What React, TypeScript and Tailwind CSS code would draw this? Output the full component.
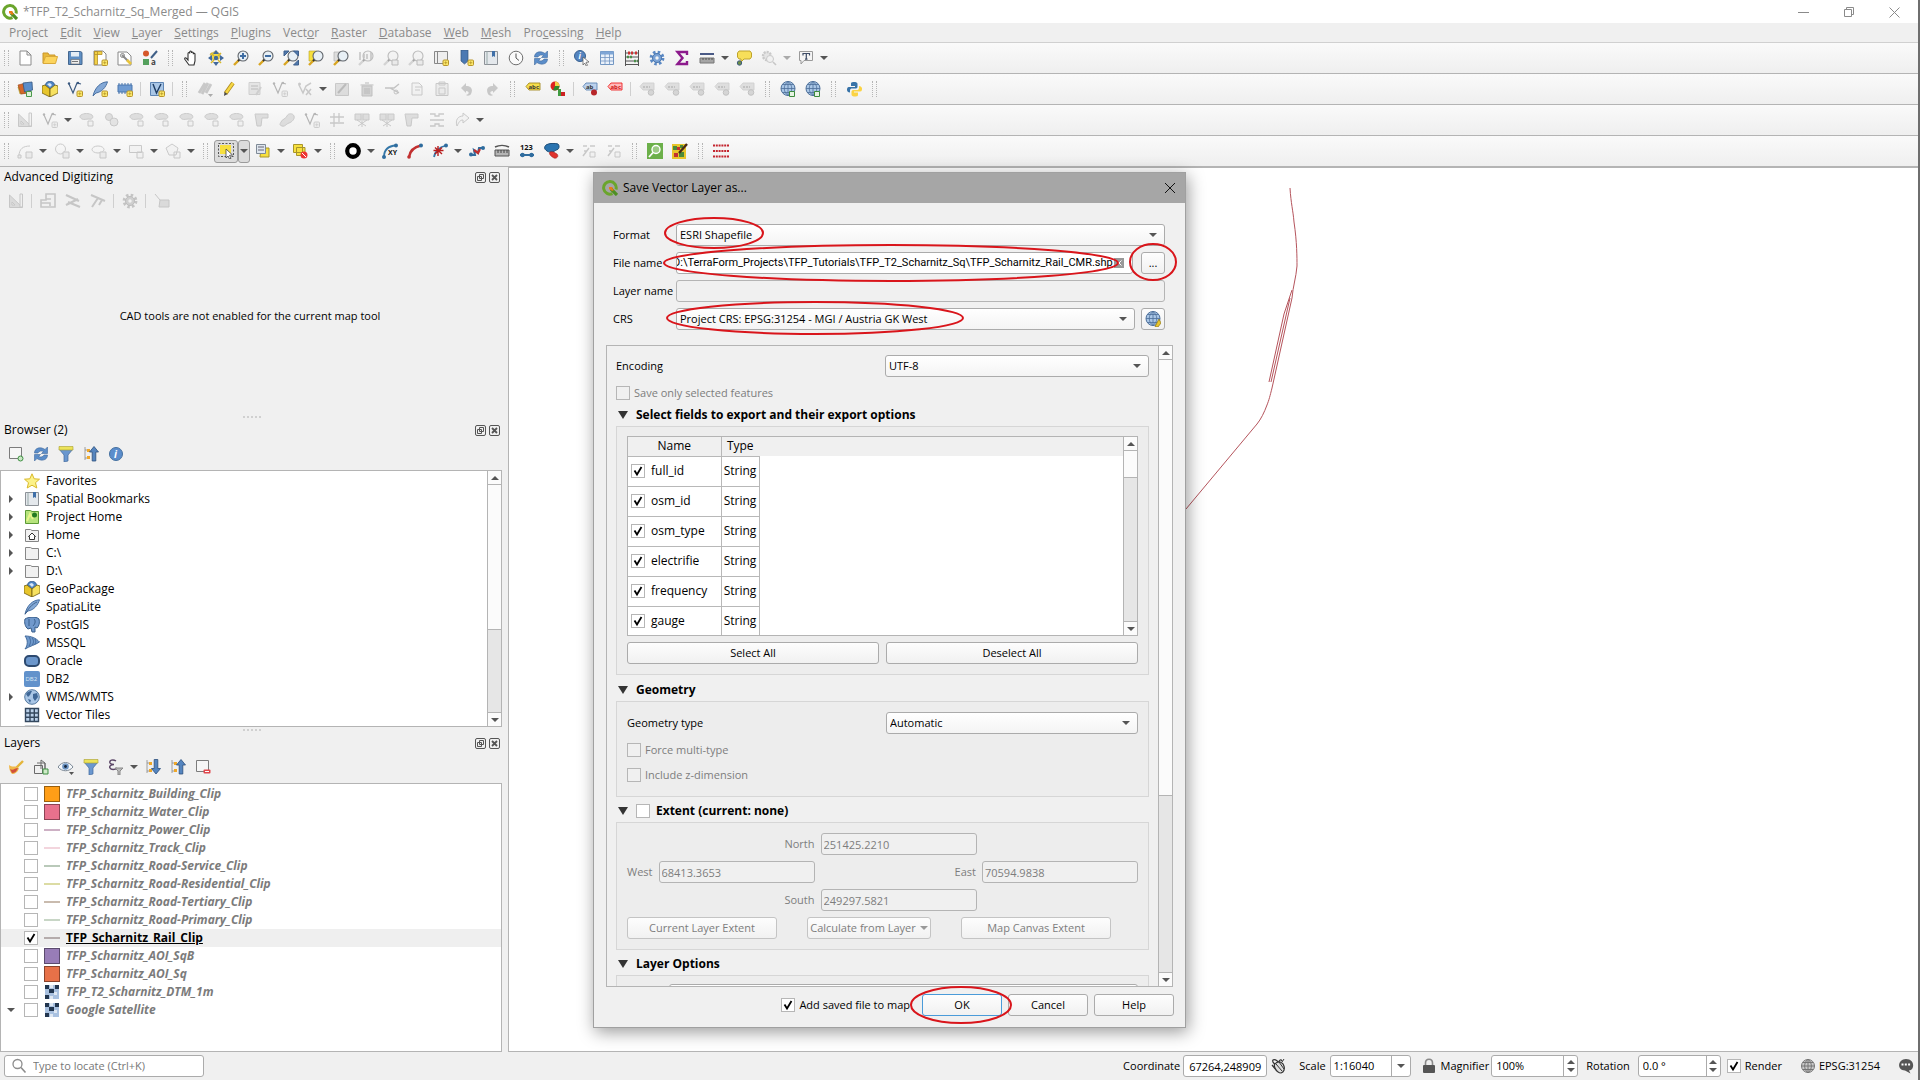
import React from "react";

type IconName = keyof typeof icons;

interface CheckProps {
  id: string;
  label?: string;
  checked?: boolean;
  disabled?: boolean;
  className?: string;
}

interface LayerItem {
  name: string;
  kind: "fill" | "line" | "raster";
  color?: string;
  active?: boolean;
  expandable?: boolean;
}

/* ---------- icon parts ---------- */

const plusBadge = (
  <>
    <rect x="10" y="10" width="5.5" height="5.5" rx="1" fill="#fbe96b" stroke="#b8952a" />
    <path d="M12.7 11.3v3M11.3 12.7h3" stroke="#b8952a" strokeWidth="0.8" />
  </>
);

const lens = (
  <>
    <path d="M6 10 1 15" stroke="#d9a521" strokeWidth="2.4" />
    <path d="M6.5 9.5 5 11" stroke="#333" strokeWidth="2" />
    <circle cx="10" cy="6" r="5" fill="#e8f0f6" stroke="#60656b" strokeWidth="1.1" />
  </>
);

const globe = (
  <>
    <circle cx="8" cy="7.5" r="7" fill="#a9c6e6" stroke="#4d6f99" />
    <path d="M8 .5v14M1 7.5h14M2.5 3.5h11M2.5 11.5h11M8 .5C3 4 3 11 8 14.5M8 .5c5 3.5 5 10.5 0 14" fill="none" stroke="#4d6f99" strokeWidth="0.8" />
  </>
);

const tag = (fill: string, stroke: string) => (
  <path d="M1 5.5 4 2h11v7H4z" fill={fill} stroke={stroke} strokeWidth="0.9" />
);

const tree = (
  <>
    <path d="M2 1v13M2 4h3M2 12h3" stroke="#888" fill="none" strokeWidth="0.8" />
    <path d="M4 3h3v3H4zM4 10h3v3H4z" fill="#f0a828" />
  </>
);

const folder = (
  <path d="M1.5 14.5v-12h5l1.5 1h6.5v11z" fill="#f1f1f1" stroke="#868686" />
);

const icons = {
  file: <path d="M3 1h7l4 4v10H3zM10 1v4h4" fill="#fff" stroke="#8b8b8b" />,
  open: (
    <>
      <path d="M1 13V3h5l1 2h6v3" fill="#e9b93a" stroke="#c9962a" />
      <path d="M1 13.5 3.5 6.5h12l-2 7z" fill="#fcd45c" stroke="#d9a93a" />
    </>
  ),
  save: (
    <>
      <path d="M1.5 1.5h12l1.5 1v12H1.5z" fill="#5f8fc4" stroke="#44678f" />
      <path d="M4 2h8v4.5H4z" fill="#e6eef6" />
      <path d="M4 9.5h8.500V14H4z" fill="#eee" stroke="#666" strokeWidth="0.6" />
      <path d="M5 11.5h6" stroke="#777" />
    </>
  ),
  layout: (
    <>
      <path d="M2 1h9l3 3v11H2z" fill="#fff" stroke="#888" />
      <path d="M2.5 1.5h3v13h-3zM2.5 1.5H10v3H2.5z" fill="#f2d147" stroke="#b5922a" strokeWidth="0.8" />
      {plusBadge}
    </>
  ),
  layoutManager: (
    <>
      <path d="M1 2h9l4 4v9H1z" fill="#fff" stroke="#888" />
      <path d="m5 5 6 6" stroke="#8b8b8b" strokeWidth="2" />
      <path d="m10 10 4 4" stroke="#e9c53c" strokeWidth="2.600" />
      <circle cx="5.5" cy="5.5" r="2" fill="none" stroke="#888" />
    </>
  ),
  style: (
    <>
      <circle cx="4" cy="3.5" r="3" fill="#d5582a" />
      <path d="M15 1 9 8" stroke="#3f5f87" strokeWidth="2" />
      <path d="M1 9h6v6H1z" fill="#54a05d" />
      <text x="9" y="15" fontSize="8" fontWeight="bold" fill="#444">a</text>
    </>
  ),
  hand: (
    <path
      d="M6 15 2 9.5c-1-1.5.5-2.3 1.5-1.200L5 10V3.5c0-1.3 1.7-1.3 1.7 0V2c0-1.3 1.8-1.3 1.8 0v1c0-1.3 1.8-1.3 1.8 0v1.2c0-1.2 1.7-1.2 1.7 0V11l-1 4z"
      fill="#fff"
      stroke="#333"
      strokeWidth="1.1"
    />
  ),
  panSel: (
    <>
      <path d="M2 4 8 1l4 3-1 5-6 1z" fill="#f4dc4a" stroke="#a89030" strokeWidth="0.6" />
      <path d="M8 0 5 4h6zM8 16l-3-4h6zM0 8l4-3v6zM16 8l-4-3v6z" fill="#41699c" />
      <circle cx="8" cy="8" r="2.2" fill="#41699c" />
      <path d="M3 3l3 3M13 3l-3 3M3 13l3-3M13 13l-3-3" stroke="#d8b82b" strokeWidth="1.5" />
    </>
  ),
  zoomIn: (
    <>
      {lens}
      <path d="M10 3v6M7 6h6" stroke="#3f6da3" strokeWidth="2" />
    </>
  ),
  zoomOut: (
    <>
      {lens}
      <path d="M7 6h6" stroke="#3f6da3" strokeWidth="2" />
    </>
  ),
  zoomFull: (
    <>
      {lens}
      <path d="M1 6V1h5zM15.5 6V1h-5zM15.5 10v5h-5z" fill="#4f78ac" stroke="#3d5f8c" />
    </>
  ),
  zoomSel: (
    <>
      <path d="M1 1h8v10H1z" fill="#f7e03e" stroke="#b5a22a" strokeWidth="0.6" />
      {lens}
    </>
  ),
  zoomLayer: (
    <>
      <path d="M1 2h7v9H1z" fill="#ddd" stroke="#aaa" strokeWidth="0.6" />
      {lens}
    </>
  ),
  zoomNative: (
    <>
      {lens}
      <path d="M2 2v8M13 2v8M6 4v4M9 4v5" stroke="#777" strokeWidth="1.5" />
    </>
  ),
  zoomBack: (
    <>
      {lens}
      <path d="M9 10h6v5H9z" fill="#ddd" stroke="#666" />
    </>
  ),
  zoomGear: (
    <>
      <circle cx="6" cy="6" r="4" fill="#ccc" stroke="#888" strokeWidth="2.4" strokeDasharray="2 1" />
      <circle cx="9" cy="9" r="3.5" fill="#eee" stroke="#888" />
      <path d="m12 12 3 3" stroke="#888" strokeWidth="1.6" />
    </>
  ),
  bookmarkNew: (
    <>
      <path d="M1.5 1.5h13v12h-13z" fill="#eee" stroke="#888" />
      <path d="M4.5 1.5v12" stroke="#888" />
      {plusBadge}
    </>
  ),
  flagNew: (
    <>
      <path d="M3 0h7v11l-3.5 3L3 11z" fill="#4b79b3" stroke="#35577f" strokeWidth="0.7" />
      {plusBadge}
    </>
  ),
  bookmarks: (
    <>
      <path d="M1.5 1.5h13v13h-13z" fill="#e4e8ec" stroke="#8c9197" />
      <path d="M4 1.5v13" stroke="#9aa" />
      <path d="M9 1h3v6l-1.5-1L9 7z" fill="#3f6fa8" />
    </>
  ),
  clock: (
    <>
      <circle cx="8" cy="8" r="6.8" fill="#fafafa" stroke="#6f6f6f" />
      <path d="M8 3.5V8l3 2.5" fill="none" stroke="#555" />
    </>
  ),
  refresh: (
    <>
      <path d="M1.5 7C1.500 1.500 8 .5 12 3.500L14.500 1v6.500H8.500l2-2C8.500 4.500 6 5 5 7z" fill="#5b8dc9" stroke="#41699c" strokeWidth="0.6" />
      <path d="M14.5 9c0 5.500-6.500 6.500-10.500 3.500L1.500 15V8.500h6l-2 2c2 1 4.500.5 5.500-1.500z" fill="#5b8dc9" stroke="#41699c" strokeWidth="0.6" />
    </>
  ),
  identify: (
    <>
      <circle cx="6" cy="6" r="5.5" fill="#5484bf" stroke="#38608f" />
      <text x="4.5" y="9" fontSize="8" fontWeight="bold" fontStyle="italic" fill="#fff">i</text>
      <path d="m9 7 6 5-3 .3 1.5 3-1.3.7-1.5-3L9 15z" fill="#fff" stroke="#555" strokeWidth="0.7" />
    </>
  ),
  table: (
    <>
      <path d="M1.5 1.5h13v13h-13z" fill="#eaf1fa" stroke="#7296c2" />
      <path d="M1.5 1.5h13v3h-13z" fill="#7fa6d6" />
      <path d="M1.5 7.5h13M1.5 11h13M6 4v10M10.5 4v10" stroke="#7296c2" strokeWidth="0.8" />
    </>
  ),
  abacus: (
    <>
      <path d="M1.5 0v16M14.5 0v16M1 14.5h14M1 3h14M1 7h14M1 11h14" stroke="#555" />
      <path d="M4 3h5M11 3h2" stroke="#c33" strokeWidth="3" strokeDasharray="2 1" />
      <path d="M3 7h5M10 11h4" stroke="#4a8f4a" strokeWidth="2.600" strokeDasharray="2 1" />
    </>
  ),
  gear: (
    <>
      <circle cx="8" cy="8" r="5.8" fill="none" stroke="#5b89c4" strokeWidth="3.2" strokeDasharray="2.4 2.15" />
      <circle cx="8" cy="8" r="4.5" fill="#7ba3d6" stroke="#4a76ad" />
      <circle cx="8" cy="8" r="1.7" fill="#f4f4f4" />
    </>
  ),
  sigma: <path d="M13 5V2H3.500l5 6-5 6H13v-3" fill="none" stroke="#8c1a8c" strokeWidth="2.4" />,
  measure: (
    <>
      <path d="M1 4h14" stroke="#4a5a86" strokeWidth="2" />
      <path d="M1 8h14v5H1z" fill="#a5a5a5" stroke="#777" />
      <path d="M4 8v2M7 8v2M10 8v2M13 8v2" stroke="#555" />
    </>
  ),
  tip: (
    <>
      <path d="M3 1h11l1.5 2v4L14 9H8l-3 3V9H3L1.500 7V3z" fill="#f7df5a" stroke="#bfa42c" />
      <circle cx="3.5" cy="13" r="2.2" fill="#6d8f47" stroke="#3f5b80" />
    </>
  ),
  textNote: (
    <>
      <path d="M1.5 1.5h13v9H6l-3 3.5v-3.5H1.500z" fill="#f5f5f5" stroke="#9a9a9a" />
      <path d="M5 5.500v-2h6.500v2M8.300 3.500v6M7 9.200h2.500" stroke="#3e4c66" strokeWidth="1.2" fill="none" />
    </>
  ),
  dataSource: (
    <>
      <path d="m1 6 6-2 2 8-6 1z" fill="#e9c53c" stroke="#a58a22" strokeWidth="0.6" />
      <path d="m1 4 8-2 2 10-7 1z" fill="#d5672a" stroke="#99471c" strokeWidth="0.6" />
      <path d="m6 2 9-1 .5 8-8 2z" fill="#5b8dc9" stroke="#35577f" strokeWidth="0.8" />
      <path d="M9.5 10.5h5v5h-5z" fill="#dff0d8" stroke="#4a9a4a" />
    </>
  ),
  geopackage: (
    <>
      <circle cx="8" cy="5" r="4.8" fill="#4d84c4" stroke="#2c527f" strokeWidth="0.7" />
      <path d="M5 3l3-1 2 2-2 2z" fill="#d9e8f7" />
      <path d="m0 5 3-1 5 4v8l-8-4z" fill="#e7c52c" stroke="#6e5c10" strokeWidth="0.8" />
      <path d="m16 5-3-1-5 4v8l8-4z" fill="#f7e160" stroke="#6e5c10" strokeWidth="0.8" />
    </>
  ),
  vector: (
    <>
      <path d="m2 3 4 9 4-10 4 1" fill="none" stroke="#3c5a80" strokeWidth="1.2" />
      <circle cx="2" cy="2.5" r="1.2" fill="#3c5a80" />
      <circle cx="11" cy="2" r="1.2" fill="#3c5a80" />
      {plusBadge}
    </>
  ),
  feather: (
    <>
      <path d="M1 15C3 6 9 1 15.500.8 14 6 10 11 4 12z" fill="#83a8d6" stroke="#41699c" strokeWidth="0.9" />
      <path d="M1 15.500C4 10 8 5 13 3" fill="none" stroke="#35577f" strokeWidth="0.8" />
    </>
  ),
  featherNew: (
    <>
      <path d="M1 15C3 6 9 1 15.500.8 14 6 10 11 4 12z" fill="#83a8d6" stroke="#41699c" strokeWidth="0.9" />
      {plusBadge}
    </>
  ),
  memory: (
    <>
      <path d="M2 2v11M5 2v11M8 2v11M11 2v11M14 2v11" stroke="#4a76ad" />
      <path d="M1 4h14v7H1z" fill="#6f9bd2" stroke="#4a76ad" />
      {plusBadge}
    </>
  ),
  virtual: (
    <>
      <path d="M1.5 1.5h13v13h-13z" fill="#a9c6e6" stroke="#5f86b5" />
      <path d="m4 3 3.5 9L12 3" fill="none" stroke="#1e3c63" strokeWidth="1.4" />
      {plusBadge}
    </>
  ),
  pencils: (
    <>
      <path d="M2 12 8 2M5 13l6-11M9 12l5-9" stroke="#888" strokeWidth="2.8" />
      <path d="M11 13h5l-2.500 3z" fill="#444" />
    </>
  ),
  pencil: (
    <>
      <path d="M3.5 12.5 11 2" stroke="#b08c1f" strokeWidth="4" />
      <path d="M4 12 11 2" stroke="#f6d743" strokeWidth="2.4" />
      <path d="m2 15 .5-4 3 2z" fill="#4a4a4a" />
    </>
  ),
  saveEdits: (
    <>
      <path d="M2 1.5h11v12H2z" fill="#ccc" stroke="#999" />
      <path d="M4 5h7M4 8h7" stroke="#888" strokeWidth="1.5" />
      <path d="M9 14l5-8" stroke="#999" strokeWidth="2" />
    </>
  ),
  node: (
    <>
      <path d="m2 4 4 8 3-7 5-3M9 8l5 6M14 8l-5 6" fill="none" stroke="#888" strokeWidth="1.5" />
      <circle cx="2.5" cy="3" r="1.5" fill="#888" />
    </>
  ),
  modify: (
    <>
      <path d="M1.5 2.5h13v12h-13z" fill="#bbb" stroke="#888" />
      <path d="m4 12 8-9" stroke="#666" strokeWidth="2" />
    </>
  ),
  trash: (
    <>
      <path d="M3 5h10v10H3z" fill="#c99" stroke="#a66" />
      <path d="M1.5 4h13M6 2h4M6 7v6M8 7v6M10 7v6" stroke="#955" />
    </>
  ),
  cut: (
    <>
      <path d="M1 7h9l5-4M6 7l9 5" fill="none" stroke="#777" strokeWidth="1.4" />
      <circle cx="12" cy="11" r="2" fill="none" stroke="#777" />
    </>
  ),
  copy: <path d="M3 2h7l3 3v9H3zM6 6h7M6 9h5" fill="#eee" stroke="#888" />,
  paste: <path d="M2 2.5h12v12H2zM5 1h6v3H5zM5 7h6v6H5z" fill="#ddd" stroke="#888" />,
  undo: <path d="M2 7 7 2v3c6 0 7 4 5 8-1 2-4 2-5 1 4-1 3-4 0-4v2z" fill="#888" />,
  redo: <path d="m14 7-5-5v3c-6 0-7 4-5 8 1 2 4 2 5 1-4-1-3-4 0-4v2z" fill="#888" />,
  label: (
    <>
      {tag("#f6df4c", "#a58a22")}
      <text x="3.5" y="8" fontSize="6" fontWeight="bold" fill="#333">abc</text>
    </>
  ),
  diagram: (
    <>
      <circle cx="5" cy="5" r="4.5" fill="#d22" />
      <path d="M5 5V.5A4.500 4.500 0 0 1 9.500 5z" fill="#f2d147" />
      <path d="M5 5h4.500A4.500 4.500 0 0 1 3 9z" fill="#2c8a2c" />
      <path d="M8 8h3v7H8z" fill="#3f9b3f" />
      <path d="M11 11h4v4h-4z" fill="#c22" />
    </>
  ),
  labelPin: (
    <>
      {tag("#bcd1ec", "#5f86b5")}
      <text x="4" y="8" fontSize="6" fontWeight="bold" fill="#333">ab</text>
      <circle cx="12" cy="11.5" r="3" fill="#b8262a" />
    </>
  ),
  labelRed: (
    <>
      {tag("#fbb", "#e22")}
      <text x="3.5" y="8" fontSize="6" fontWeight="bold" fill="#c11">abc</text>
    </>
  ),
  labelGrey: (
    <>
      {tag("#bbb", "#999")}
      <path d="M4 6h7" stroke="#777" strokeWidth="2" strokeDasharray="2 1" />
      <circle cx="12" cy="11.5" r="2.8" fill="#aaa" stroke="#777" />
    </>
  ),
  globePlug: (
    <>
      {globe}
      <path d="M9.5 10.5h5v5h-5z" fill="#e6f3e2" stroke="#3d8a3d" />
    </>
  ),
  python: (
    <>
      <path d="M8 1C5 1 5 2 5 3v2h4v1H3C1 6 1 8 1 9s1 2.5 3 2.5V9.500C4 8 5 7.500 6 7.500h4c1 0 1.500-1 1.500-2V3C11.500 1.500 10 1 8 1z" fill="#3873a8" />
      <path d="M9 15.5c3 0 3-1 3-2v-2H8v-1h6c2 0 2-2 2-3S15 5 13 5v2c0 1.500-1 2-2 2H7c-1 0-1.500 1-1.500 2v2.500c0 1.500 1.500 2 3.500 2z" fill="#fbd343" />
    </>
  ),
  ruler: (
    <>
      <path d="M1.5 2v12.500h13z" fill="#bbb" stroke="#888" />
      <path d="M12 1h2.500v13H12zM4 9v3h3z" fill="#eee" stroke="#888" />
    </>
  ),
  shapeMove: (
    <>
      <path d="M2 3c3-2 8-2 11 0 2 2 0 5-3 4-3 0-5 1-7 0S0 4 2 3z" fill="#bbb" stroke="#888" />
      <path d="M9 9h5v5H9z" fill="#eee" stroke="#888" />
    </>
  ),
  shapes: (
    <>
      <circle cx="5" cy="5" r="3.5" fill="#bbb" stroke="#888" />
      <circle cx="10" cy="10" r="4" fill="#ccc" stroke="#888" />
    </>
  ),
  shapeOff: <path d="M1 2h13v4H8l-1 8H3L2 8z" fill="#bbb" stroke="#888" />,
  blob: <path d="M2 10c1-3 5-3 6-6s6-3 7 0-2 6-5 7-4 4-7 3-2-2-1-4z" fill="#bbb" stroke="#888" />,
  split: <path d="M1 5h14M1 11h14M5 1v14M10 1v9" fill="none" stroke="#888" strokeWidth="1.3" />,
  align: <path d="M1 2h5v2h4V2h5M1 8h14M1 14h5v-2h4v2h5" fill="none" stroke="#888" strokeWidth="1.3" />,
  cutShape: (
    <>
      <path d="M1 2h6v6H1zM9 2h6v6H9z" fill="#bbb" stroke="#888" />
      <path d="M8 1v14M3 8l9 6M13 8l-9 6" stroke="#888" />
    </>
  ),
  rotate: <path d="M3 14C1 8 4 4 9 4V1l6 5-6 5V8c-3 0-4 2-6 6z" fill="#eee" stroke="#888" />,
  curve: (
    <>
      <path d="M2 13c0-7 4-10 11-10" fill="none" stroke="#888" />
      <path d="M1 12h3v3H1zM9 9h6v6H9z" fill="#ddd" stroke="#888" />
    </>
  ),
  circle: (
    <>
      <circle cx="6.5" cy="6" r="5" fill="none" stroke="#888" />
      <path d="M9 9h6v6H9z" fill="#ddd" stroke="#888" />
    </>
  ),
  ellipse: (
    <>
      <ellipse cx="7" cy="6.5" rx="6" ry="3.5" fill="none" stroke="#888" />
      <path d="M9 9h6v6H9z" fill="#ddd" stroke="#888" />
    </>
  ),
  rectangle: <path d="M1.5 2.5h12v7h-12zM9 9h6v6H9z" fill="#eee" stroke="#888" />,
  polygon: <path d="m7 1 6 4-2 7H4L1 5zM9 9h6v6H9z" fill="#eee" stroke="#888" />,
  select: (
    <>
      <path d="M2 2h11v9H2z" fill="#f7e03e" />
      <path d="M.5.5h15v13H.5z" fill="none" stroke="#555" strokeDasharray="2 1.5" />
      <path d="m8 6 6.5 6-3 .3 1.5 3-1.5.7-1.5-3L8 15z" fill="#fff" stroke="#444" strokeWidth="0.8" />
    </>
  ),
  selectForm: (
    <>
      <path d="M6 5h8v9H5z" fill="#f7e03e" stroke="#a8952a" />
      <path d="M1.5 1.5h9v9h-9z" fill="#dfe6ee" stroke="#7f8a96" />
      <path d="M3 4h6M3 7h6" stroke="#667" />
    </>
  ),
  deselect: (
    <>
      <path d="M1.5 1.5h9v8h-9zM4.5 4.500h8.500v8H4.500z" fill="#f7e03e" stroke="#a8952a" />
      <circle cx="12" cy="12" r="3.5" fill="#e33" />
      <path d="m10 10 4 4" stroke="#fff" />
    </>
  ),
  ring: <circle cx="8" cy="8" r="5.8" fill="#fff" stroke="#000" strokeWidth="4.2" />,
  curveXY: (
    <>
      <path d="M2 14C2 7 6 3 14 2.500" fill="none" stroke="#3577a8" strokeWidth="1.8" />
      <circle cx="2" cy="14" r="2" fill="#2f6c9e" />
      <circle cx="14" cy="2.5" r="2" fill="#2f6c9e" />
      <text x="6" y="12" fontSize="7" fontWeight="bold" fill="#111">XY</text>
    </>
  ),
  curveRed: (
    <>
      <path d="M2 14C3 7 7 4 14 2.500" fill="none" stroke="#c23030" strokeWidth="2.4" />
      <circle cx="2" cy="14" r="1.8" fill="#c23030" />
      <circle cx="14" cy="2.5" r="2" fill="#2f6c9e" />
    </>
  ),
  curveStar: (
    <>
      <path d="M2 14C3 8 8 4 14 2.500" fill="none" stroke="#3577a8" strokeWidth="1.8" />
      <path d="M6 3v10M1.500 7.500h10M3 4.500l7 6.500M10 4.500 3 11" stroke="#b81d1d" strokeWidth="1.4" />
      <circle cx="14" cy="2.5" r="2" fill="#2f6c9e" />
    </>
  ),
  zigzag: (
    <>
      <path d="M1 12h5l-1-5 4 3 1-5h5" fill="none" stroke="#2f6c9e" strokeWidth="2" />
      <path d="m5 7 4 3 2-4" fill="none" stroke="#c23030" strokeWidth="2.2" />
      <circle cx="2" cy="11.5" r="2" fill="#2f6c9e" />
      <circle cx="14" cy="5" r="2" fill="#2f6c9e" />
    </>
  ),
  scaleBar: (
    <>
      <path d="M1 4c4-2 10-2 14 0" fill="none" stroke="#555" strokeWidth="1.5" />
      <path d="M1 7h14v6H1z" fill="#b5b5b5" stroke="#555" />
      <path d="M4 7v3M7 7v3M10 7v3M13 7v3" stroke="#444" />
    </>
  ),
  numbers: (
    <>
      <text x="1" y="7" fontSize="7.5" fontWeight="bold" fill="#111">123</text>
      <path d="M1 12h14" stroke="#2f6c9e" strokeWidth="2" />
      <circle cx="3.5" cy="12" r="2.2" fill="#2f6c9e" />
      <circle cx="12.5" cy="12" r="2.2" fill="#2f6c9e" />
    </>
  ),
  cloudRed: (
    <>
      <path d="M2 2c3-2 9-2 12-1 2 2 1 6-2 6-2 2-6 3-9 1S0 4 2 2z" fill="#2a74b0" stroke="#1c4d78" />
      <path d="M6 9c3-1 5 1 7 2 2 2 0 5-3 4-2-1-6-4-4-6z" fill="#e0332e" stroke="#a31d1d" strokeWidth="0.6" />
    </>
  ),
  dots: (
    <>
      <path d="M2 3h4M9 3h5M3 8h3M2 13l6-8" stroke="#888" strokeWidth="1.5" />
      <path d="M9 9h5v5H9z" fill="#eee" stroke="#888" />
    </>
  ),
  searchGreen: (
    <>
      <path d="M0 0h16v16H0z" fill="#6cb04a" />
      <circle cx="9" cy="6.5" r="4" fill="#9cca84" stroke="#fff" strokeWidth="1.4" />
      <path d="m6 9.5-4 4.5" stroke="#fff" strokeWidth="1.8" />
    </>
  ),
  mapBrush: (
    <>
      <path d="M0 1h14v15H0z" fill="#e9c62b" />
      <path d="M1 3h4v4H1zM7 9h5v5H7zM8 2h3v3H8z" fill="#4c8a3a" />
      <path d="M2 10h4v4H2zM5 4h3v3H5z" fill="#c23030" />
      <path d="m7 10 8-9" stroke="#4a2a14" strokeWidth="2.4" />
    </>
  ),
  redGrid: (
    <path d="M0 2.5h16M0 8h16M0 13.5h16" stroke="#c4252f" strokeWidth="2" strokeDasharray="2 .8" />
  ),
  parallel: <path d="M1 2l13 6M3 9l12 5M1 12l12-6" fill="none" stroke="#888" strokeWidth="2.2" />,
  perpendicular: <path d="M1 2l14 6M2 14l6-9M9 12l3-5" fill="none" stroke="#888" strokeWidth="2" />,
  construct: <path d="M6 1h9v13H1V7h5zM1 10h9v3M6 1v5h5" fill="none" stroke="#888" strokeWidth="1.6" />,
  flag: <path d="m1 1 5 6M6 7h9v7H5z" fill="#bbb" stroke="#888" />,
  addLayer: (
    <>
      <path d="M1.5 1.5h12v11h-12z" fill="#f6f6f6" stroke="#7c7c7c" />
      <circle cx="12.5" cy="12.5" r="2.5" fill="#c9e6c4" stroke="#3f9142" />
    </>
  ),
  removeLayer: (
    <>
      <path d="M1.5 1.5h12v11h-12z" fill="#f6f6f6" stroke="#7c7c7c" />
      <rect x="8.5" y="10.5" width="7" height="4" rx="1" fill="#e0474c" />
      <path d="M10 12.5h4" stroke="#fff" />
    </>
  ),
  filter: (
    <>
      <path d="M1 3h14l-5 6v6l-4 1V9z" fill="#6a97cf" stroke="#41699c" strokeWidth="0.7" />
      <path d="M1 .5h14V4H1z" fill="#ece35a" stroke="#a8a02c" strokeWidth="0.6" />
    </>
  ),
  collapse: (
    <>
      {tree}
      <path d="M11 .5 6.500 6h2.700v9h3.600V6h2.700z" fill="#5585bf" stroke="#2c4f7c" strokeWidth="0.8" />
    </>
  ),
  expand: (
    <>
      {tree}
      <path d="M11 15 6.500 9.500h2.700v-9h3.600v9h2.700z" fill="#5585bf" stroke="#2c4f7c" strokeWidth="0.8" />
    </>
  ),
  info: (
    <>
      <circle cx="8" cy="8" r="6.5" fill="#5b8dcc" stroke="#45709f" />
      <text x="6" y="12" fontSize="10" fontWeight="bold" fontStyle="italic" fill="#fff">i</text>
    </>
  ),
  star: (
    <path d="m8 .8 2.200 5 5.300.4-4 3.500 1.300 5.300L8 12.200 3.200 15l1.300-5.300-4-3.500 5.300-.4z" fill="#fcf28a" stroke="#d9b92a" />
  ),
  projectHome: (
    <>
      <path d="M1.5 14.5v-13h5l1.5 1h6.5v12z" fill="#b6e37c" stroke="#5c9a35" />
      <path d="M3 12l3-7 3 5" fill="none" stroke="#e8f58a" strokeWidth="2" />
      <circle cx="10.5" cy="6" r="2.5" fill="#237a23" />
    </>
  ),
  home: (
    <>
      {folder}
      <path d="M5.5 12.500V9.500H4.500L8 6l3.500 3.500h-1v3z" fill="#fff" stroke="#333" />
    </>
  ),
  folder,
  elephant: (
    <path d="M1 2c3-2 11-3 14 0 1 4 0 7-2 9l-2-1v5H8l-1-4-3 1C1 10 0 5 1 2zM5 2v7M10 2c2 2 1 5-1 7" fill="#7199cc" stroke="#375d8a" />
  ),
  mssql: (
    <>
      <path d="M1 1c6 0 11 2 14.500 6C11 10 6 11 1 14c3-4 3-9 0-13z" fill="#6f99cc" stroke="#41699c" />
      <path d="M5 2c2 3 2 6 0 9M8 3c2 2 2 5 0 7M11 4c1 2 1 3 0 5" fill="none" stroke="#41699c" />
    </>
  ),
  oracle: <rect x="1" y="3" width="14" height="10" rx="4" fill="#6b96cb" stroke="#2d4a70" strokeWidth="2" />,
  db2: (
    <>
      <rect width="16" height="16" rx="2" fill="#6292cb" />
      <text x="1.5" y="10" fontSize="6" fill="#dbe8f6">DB2</text>
    </>
  ),
  world: (
    <>
      <circle cx="8" cy="8" r="7.3" fill="#a9c6e6" stroke="#54799f" />
      <path d="M2 5c2-3 4-3 6-3L6 6 4 8zM9 5l4-1 1 4-3 4-2-3zM4 10l3 1-1 3z" fill="#3f6796" />
    </>
  ),
  grid: (
    <>
      <path d="M1.5 1.5h13v13h-13z" fill="#b9d0ea" />
      <path d="M1.5 1.5h13v13h-13zM1.500 6h13M1.500 10.300h13M6 1.500v13M10.300 1.500v13" fill="none" stroke="#33475e" strokeWidth="1.4" />
    </>
  ),
  brush: (
    <>
      <path d="m8 9 7-7" stroke="#e4b53a" strokeWidth="2.4" />
      <path d="M1 6c3 3 6 0 10 3-1 4-4 6-7 6-2-2-3-5-3-9z" fill="#f0b84a" />
      <path d="M2 10c3 2 5-1 8-1-1 3-3 5-6 5z" fill="#d0503c" />
    </>
  ),
  addGroup: (
    <>
      <path d="M1.5 6.5h8v8h-8zM4 4h8v8M8 10V1l4 3v8" fill="none" stroke="#6a6a6a" />
      <path d="M10 10h5v5h-5z" fill="#cfeac8" stroke="#3f9142" />
    </>
  ),
  eye: (
    <>
      <path d="M0 8c4-6 11-6 15 0-4 5-11 5-15 0z" fill="#f5f8fb" stroke="#7a8794" />
      <circle cx="7.5" cy="7.5" r="3.3" fill="#6d94c2" />
      <circle cx="7.5" cy="7.5" r="1.4" fill="#16273d" />
      <path d="m11 13 2.5 3L16 13z" fill="#555" />
    </>
  ),
  epsilon: (
    <>
      <path d="M8 2C5 0 1 1 2 4c.5 1 2 1.500 4 1.500C3 5.500 1 7 2 9c1 2 5 2 7 0" fill="none" stroke="#5a4566" strokeWidth="1.5" />
      <path d="M7 9h8l-3 3v4h-2v-4z" fill="#bbb" stroke="#888" />
    </>
  ),
  raster: (
    <>
      <path d="M1 1h14v14H1z" fill="#a9c1e0" />
      <path d="M1 1h4v4H1zM11 1h4v4h-4zM5 5h5v4H5zM1 11h4v4H1z" fill="#22364f" />
      <path d="M10 8h3v3h-3zM6 1h3v3H6zM6 12h3v3H6z" fill="#dfe8f3" />
    </>
  ),
  globeEdit: (
    <>
      {globe}
      <path d="M10 15.500 14 8l2 4-3 4z" fill="#e8c52d" stroke="#8d7616" strokeWidth="0.7" />
    </>
  ),
  globeGrey: (
    <>
      <circle cx="8" cy="8" r="6.5" fill="#c9c9c9" stroke="#757575" />
      <path d="M8 1v14M1.500 8h13M3 4.500h10M3 11.500h10M8 1C3.500 5 3.500 11 8 15M8 1c4.500 4 4.500 10 0 14" fill="none" stroke="#757575" />
    </>
  ),
  mouse: (
    <>
      <path d="M5 7C2 5 1 3 2 2s4 0 5 2M8 4C8 2 10 1 11 3M1 7l5 6" fill="none" stroke="#333" strokeWidth="1.2" />
      <path d="M5 5c3-2 7-1 8 3 1 3 0 6-3 7-3 0-5-3-6-5s-1-4 1-5z" fill="#ddd" stroke="#333" strokeWidth="1.2" />
      <path d="m5 6 6 7M8 4l5 7M13 1l-2 3" stroke="#333" />
    </>
  ),
  lock: (
    <>
      <path d="M4.5 8V5c0-5 7-5 7 0v3" fill="none" stroke="#8a8a8a" strokeWidth="1.6" />
      <rect x="2" y="7" width="12" height="8" rx="1" fill="#555" />
    </>
  ),
  chat: (
    <>
      <path d="M8 1c9 0 9 11 3 11.500l1.500 3L7 12.500C-2 12 0 1 8 1z" fill="#555" />
      <path d="M3.5 6.500h9" stroke="#fff" strokeWidth="2" strokeDasharray="2 1.3" />
    </>
  ),
  search: (
    <>
      <circle cx="6.5" cy="6" r="4.5" fill="none" stroke="#8c8c8c" strokeWidth="1.3" />
      <path d="m10 9.5 4.5 5" stroke="#8c8c8c" strokeWidth="1.6" />
    </>
  ),
  qgis: (
    <>
      <path d="M10.500 13.600A6.300 6.300 0 1 1 14 9.500" fill="none" stroke="#6aa52c" strokeWidth="3" />
      <path d="m9 9 6 6" stroke="#4e8f23" strokeWidth="3.200" />
      <path d="M7 7h4l-1 1 2 2-2 1-2-2-1 1z" fill="#ee7913" />
    </>
  ),
};

const Icon: React.FC<{ name: IconName; className?: string }> = ({ name, className = "" }) => (
  <svg viewBox="0 0 16 16" className={`size-4 shrink-0 ${className}`} fill="none" aria-hidden="true">
    {icons[name]}
  </svg>
);

/* ---------- data ---------- */

const menus: [string, string, string][] = [
  ["Pro", "j", "ect"],
  ["", "E", "dit"],
  ["", "V", "iew"],
  ["", "L", "ayer"],
  ["", "S", "ettings"],
  ["", "P", "lugins"],
  ["Vect", "o", "r"],
  ["", "R", "aster"],
  ["", "D", "atabase"],
  ["", "W", "eb"],
  ["", "M", "esh"],
  ["Pro", "c", "essing"],
  ["", "H", "elp"],
];

// ":" handle, "|" separator, "v" drop-down arrow, "-" prefix marks a disabled action
const toolbars: string[][] = [
  "file open save layout layoutManager style : hand panSel zoomIn zoomOut zoomFull zoomSel zoomLayer -zoomNative -zoomBack -zoomBack bookmarkNew flagNew bookmarks clock refresh : identify table abacus gear sigma measure v tip -zoomGear -v textNote v",
  "dataSource geopackage vector featherNew memory | virtual | : -pencils pencil -saveEdits -vector -node v -modify -trash -cut -copy -paste -undo -redo : label diagram | labelPin labelRed | -labelGrey -labelGrey -labelGrey -labelGrey -labelGrey : globePlug globePlug : python :",
  "-ruler -vector v -shapeMove -shapes -shapeMove -shapeMove -shapeMove -shapeMove -shapeMove -shapeOff -blob -vector -split -cutShape -cutShape -shapeOff -align -rotate v",
  "-curve v -circle v -ellipse v -rectangle v -polygon v : *select selectForm v deselect v : ring v curveXY curveRed curveStar v zigzag scaleBar numbers cloudRed v -dots -dots : searchGreen mapBrush : redGrid",
].map((row) => row.split(" "));

const browserItems: { name: string; icon: IconName; expandable?: boolean }[] = [
  { name: "Favorites", icon: "star" },
  { name: "Spatial Bookmarks", icon: "bookmarks", expandable: true },
  { name: "Project Home", icon: "projectHome", expandable: true },
  { name: "Home", icon: "home", expandable: true },
  { name: "C:\\", icon: "folder", expandable: true },
  { name: "D:\\", icon: "folder", expandable: true },
  { name: "GeoPackage", icon: "geopackage" },
  { name: "SpatiaLite", icon: "feather" },
  { name: "PostGIS", icon: "elephant" },
  { name: "MSSQL", icon: "mssql" },
  { name: "Oracle", icon: "oracle" },
  { name: "DB2", icon: "db2" },
  { name: "WMS/WMTS", icon: "world", expandable: true },
  { name: "Vector Tiles", icon: "grid" },
];

const layers: LayerItem[] = [
  { name: "TFP_Scharnitz_Building_Clip", kind: "fill", color: "#ff9e17" },
  { name: "TFP_Scharnitz_Water_Clip", kind: "fill", color: "#e8718d" },
  { name: "TFP_Scharnitz_Power_Clip", kind: "line", color: "#cdb0c4" },
  { name: "TFP_Scharnitz_Track_Clip", kind: "line", color: "#f3d5dd" },
  { name: "TFP_Scharnitz_Road-Service_Clip", kind: "line", color: "#b9c9b9" },
  { name: "TFP_Scharnitz_Road-Residential_Clip", kind: "line", color: "#dcdca4" },
  { name: "TFP_Scharnitz_Road-Tertiary_Clip", kind: "line", color: "#c9bbae" },
  { name: "TFP_Scharnitz_Road-Primary_Clip", kind: "line", color: "#c8d6c6" },
  { name: "TFP_Scharnitz_Rail_Clip", kind: "line", color: "#b5acac", active: true },
  { name: "TFP_Scharnitz_AOI_SqB", kind: "fill", color: "#987db7" },
  { name: "TFP_Scharnitz_AOI_Sq", kind: "fill", color: "#e77148" },
  { name: "TFP_T2_Scharnitz_DTM_1m", kind: "raster" },
  { name: "Google Satellite", kind: "raster", expandable: true },
];

const fields = ["full_id", "osm_id", "osm_type", "electrifie", "frequency", "gauge"];

/* ---------- small controls ---------- */

const Triangle: React.FC<{ dir?: "up" | "down" | "right"; className?: string }> = ({
  dir = "down",
  className = "text-[#555]",
}) => {
  const d = { up: "M0 6h8L4 2z", down: "M0 2h8L4 6z", right: "M2 0v8l4-4z" }[dir];
  return (
    <svg viewBox="0 0 8 8" className={`size-2 shrink-0 ${className}`} aria-hidden="true">
      <path d={d} fill="currentColor" />
    </svg>
  );
};

const Check: React.FC<CheckProps> = ({ id, label, checked, disabled, className = "" }) => (
  <span className={`flex items-center gap-1 ${className}`}>
    <span className="relative flex size-3.5 shrink-0">
      <input
        id={id}
        type="checkbox"
        defaultChecked={checked}
        disabled={disabled}
        aria-label={label ? undefined : id}
        className="peer size-3.5 appearance-none border border-[#b6b6b6] bg-white disabled:bg-[#f0f0f0]"
      />
      <svg viewBox="0 0 14 14" className="pointer-events-none absolute inset-0 hidden peer-checked:block" aria-hidden="true">
        <path d="M3.5 6.5 6 10.5 10.5 3" fill="none" stroke="#000" strokeWidth="1.8" />
      </svg>
    </span>
    {label && (
      <label htmlFor={id} className={disabled ? "text-[#7d7d7d]" : ""}>
        {label}
      </label>
    )}
  </span>
);

const Combo: React.FC<{ id: string; value: string; className?: string }> = ({ id, value, className = "" }) => (
  <span className={`relative flex h-[22px] ${className}`}>
    <select
      id={id}
      className="size-full appearance-none rounded-[3px] border border-[#ababab] bg-linear-to-b from-white to-[#f4f4f4] pl-[3px] pr-6"
    >
      <option>{value}</option>
    </select>
    <Triangle className="pointer-events-none absolute right-2 top-[7px] text-[#555]" />
  </span>
);

const PushButton: React.FC<{
  children: React.ReactNode;
  className?: string;
  disabled?: boolean;
  label?: string;
}> = ({ children, className = "border-[#ababab]", disabled, label }) => (
  <button
    type="button"
    disabled={disabled}
    aria-label={label}
    className={`flex h-[22px] items-center justify-center whitespace-nowrap rounded-[3px] border bg-linear-to-b from-[#fdfdfd] to-[#f1f1f1] disabled:text-[#7d7d7d] ${className}`}
  >
    {children}
  </button>
);

const ScrollBar: React.FC<{ thumb: string }> = ({ thumb }) => (
  <div className="flex w-3.5 shrink-0 flex-col border-l border-[#b4b4b4] bg-[#e6e6e6]">
    <button type="button" aria-label="Scroll up" className="flex h-3.5 items-center justify-center border-b border-[#b4b4b4] bg-[#fbfbfb]">
      <Triangle dir="up" />
    </button>
    <div className={`border-b border-[#b4b4b4] bg-[#fbfbfb] ${thumb}`} />
    <button type="button" aria-label="Scroll down" className="mt-auto flex h-3.5 items-center justify-center border-t border-[#b4b4b4] bg-[#fbfbfb]">
      <Triangle />
    </button>
  </div>
);

const Handle: React.FC = () => (
  <span className="flex w-4 shrink-0 justify-center">
    <span className="h-4 w-[5px] border-x border-dotted border-[#b5b5b5]" />
  </span>
);

const Toolbar: React.FC<{ items: string[] }> = ({ items }) => (
  <div className="flex h-[31px] items-center border-b border-[#b4b4b4] bg-linear-to-b from-[#fafafa] to-[#efefef] pl-1">
    <span className="mr-[3px] h-4 w-[5px] border-x border-dotted border-[#b5b5b5]" />
    {items.map((item, i) => {
      if (item === ":") return <Handle key={i} />;
      if (item === "|") return <span key={i} className="mx-[3px] h-3.5 w-px shrink-0 bg-[#cfcfcf]" />;
      if (item === "v" || item === "-v")
        return (
          <button key={i} type="button" aria-label="More" className="flex w-3 shrink-0 justify-center">
            <Triangle className={item === "v" ? "text-[#555]" : "text-[#aaa]"} />
          </button>
        );
      if (item.startsWith("*"))
        return (
          <span key={i} className="ml-px flex h-[23px] w-9 shrink-0">
            <button type="button" aria-label="Select features" className="flex w-6 items-center justify-center rounded-[3px] border border-[#9b9b9b] bg-[#dcdcdc]">
              <Icon name={item.slice(1) as IconName} />
            </button>
            <button type="button" aria-label="More" className="flex w-3 items-center justify-center rounded-[3px] border border-[#9b9b9b] bg-[#dcdcdc]">
              <Triangle />
            </button>
          </span>
        );
      const off = item.startsWith("-");
      const name = (off ? item.slice(1) : item) as IconName;
      return (
        <button key={i} type="button" aria-label={name} disabled={off} className="flex w-[25px] shrink-0 justify-center">
          <Icon name={name} className={off ? "opacity-40 grayscale" : ""} />
        </button>
      );
    })}
  </div>
);

const DockTitle: React.FC<{ title: string }> = ({ title }) => (
  <div className="flex h-5 shrink-0 items-center gap-[3px] pl-1 pr-2">
    <h2 className="mr-auto text-xs">{title}</h2>
    <button type="button" aria-label={`Float ${title}`}>
      <svg viewBox="0 0 11 11" className="size-[11px]" fill="none" stroke="#555">
        <rect x=".5" y=".5" width="10" height="10" rx="1.5" />
        <path d="M4.5 2.5h4v4h-4zM2.5 4.5h4v4h-4z" />
      </svg>
    </button>
    <button type="button" aria-label={`Close ${title}`}>
      <svg viewBox="0 0 11 11" className="size-[11px]" fill="none" stroke="#555">
        <rect x=".5" y=".5" width="10" height="10" rx="1.5" />
        <path d="m3 3 5 5M8 3 3 8" strokeWidth="1.8" />
      </svg>
    </button>
  </div>
);

const DockTools: React.FC<{ items: string[] }> = ({ items }) => (
  <div className="flex h-7 shrink-0 items-center pl-[3px]">
    {items.map((item, i) => {
      if (item === "|") return <span key={i} className="mx-[3px] h-3.5 w-px bg-[#cfcfcf]" />;
      if (item === "v") return <span key={i} className="flex w-3 justify-center"><Triangle /></span>;
      const off = item.startsWith("-");
      const name = (off ? item.slice(1) : item) as IconName;
      return (
        <button key={i} type="button" aria-label={name} disabled={off} className="flex w-[25px] justify-center">
          <Icon name={name} className={off ? "opacity-40 grayscale" : ""} />
        </button>
      );
    })}
  </div>
);

const Splitter: React.FC = () => (
  <div className="flex h-1.5 shrink-0 items-center justify-center pr-1">
    <span className="w-[18px] border-t-2 border-dotted border-[#d0d0d0]" />
  </div>
);

/* ---------- docks ---------- */

const BrowserDock: React.FC = () => (
  <section>
    <DockTitle title="Browser (2)" />
    <DockTools items={["addLayer", "refresh", "filter", "collapse", "info"]} />
    <div className="mr-1.5 mt-0.5 flex h-[257px] overflow-hidden border border-[#b4b4b4] bg-white">
      <ul className="flex-1 pt-px text-xs">
        {browserItems.map((item) => (
          <li key={item.name} className="flex h-[18px] items-center">
            <span className="flex w-[23px] justify-center pr-1">{item.expandable && <Triangle dir="right" />}</span>
            <Icon name={item.icon} />
            <span className="ml-1.5">{item.name}</span>
          </li>
        ))}
        <li className="flex h-[18px] items-center pl-[23px]">
          <Icon name="grid" />
        </li>
      </ul>
      <ScrollBar thumb="h-[145px]" />
    </div>
  </section>
);

const LayerSymbol: React.FC<{ layer: LayerItem }> = ({ layer }) => {
  if (layer.kind === "raster") return <Icon name="raster" />;
  if (layer.kind === "line") return <span className="h-0.5 w-4" style={{ backgroundColor: layer.color }} />;
  return <span className="size-4 border border-black/40" style={{ backgroundColor: layer.color }} />;
};

const LayersDock: React.FC = () => (
  <section className="flex flex-1 flex-col">
    <DockTitle title="Layers" />
    <DockTools items={["brush", "addGroup", "eye", "filter", "epsilon", "v", "expand", "collapse", "removeLayer"]} />
    <ul className="mr-1.5 mt-0.5 flex-1 border border-[#b4b4b4] bg-white pt-px text-xs font-bold">
      {layers.map((layer) => (
        <li key={layer.name} className={`flex h-[18px] items-center ${layer.active ? "bg-[#efefef]" : ""}`}>
          <span className="flex w-[23px] justify-center pr-1">{layer.expandable && <Triangle />}</span>
          <Check id={layer.name} checked={layer.active} />
          <span className="mx-1.5 flex w-4 items-center">
            <LayerSymbol layer={layer} />
          </span>
          <span className={layer.active ? "text-black underline" : "italic text-[#7b7b7b]"}>{layer.name}</span>
        </li>
      ))}
    </ul>
  </section>
);

/* ---------- dialog ---------- */

const GroupTitle: React.FC<{ title: string; check?: boolean }> = ({ title, check }) => (
  <div className="flex h-[22px] items-center pl-0.5">
    <svg viewBox="0 0 10 8" className="mr-2 h-2 w-2.5" aria-hidden="true">
      <path d="M0 0h10L5 8z" fill="#333" />
    </svg>
    {check && <Check id="extent" className="mr-1.5" />}
    <h3 className="text-xs font-bold">{title}</h3>
  </div>
);

const ExtentField: React.FC<{ name: string; value: string }> = ({ name, value }) => (
  <span className="flex items-center gap-1.5">
    <label htmlFor={name}>{name}</label>
    <input
      id={name}
      disabled
      defaultValue={value}
      className="h-[22px] w-[156px] rounded-[3px] border border-[#b4b4b4] bg-[#f0f0f0] px-0.5"
    />
  </span>
);

const SaveDialog: React.FC = () => (
  <div
    role="dialog"
    aria-label="Save Vector Layer as..."
    className="absolute left-[593px] top-[172px] w-[593px] border border-[#a0a0a0] bg-[#f0f0f0] text-[11px] leading-4 shadow-[2px_4px_16px_rgba(0,0,0,0.4)]"
  >
    <header className="flex h-[30px] items-center bg-[#a6a6a6] pl-2 pr-[9px]">
      <Icon name="qgis" />
      <h2 className="ml-[5px] mr-auto text-xs">Save Vector Layer as...</h2>
      <button type="button" aria-label="Close">
        <svg viewBox="0 0 12 12" className="size-3" stroke="#111">
          <path d="m1 1 10 10M11 1 1 11" />
        </svg>
      </button>
    </header>

    <form>
      <div className="grid grid-cols-[63px_1fr] items-center gap-y-1.5 pl-[19px] pr-5 pt-[21px]">
        <label htmlFor="format">Format</label>
        <Combo id="format" value="ESRI Shapefile" />
        <label htmlFor="file">File name</label>
        <div className="flex items-center gap-2">
          <span className="flex h-[22px] flex-1 items-center rounded-[3px] border border-[#ababab] bg-white pr-2">
            <input
              id="file"
              className="min-w-0 flex-1 indent-[-4px] font-['Roboto','Open_Sans',sans-serif] outline-none"
              defaultValue="D:\TerraForm_Projects\TFP_Tutorials\TFP_T2_Scharnitz_Sq\TFP_Scharnitz_Rail_CMR.shp"
            />
            <button type="button" aria-label="Clear">
              <svg viewBox="0 0 10 10" className="size-2.5" stroke="#fff">
                <path d="M0 0h10v10H0z" fill="#999" stroke="none" />
                <path d="m2.5 2.5 5 5M7.5 2.5l-5 5" />
              </svg>
            </button>
          </span>
          <PushButton className="w-6 border-[#ababab]">...</PushButton>
        </div>
        <label htmlFor="layer">Layer name</label>
        <input id="layer" disabled className="h-[22px] rounded-[3px] border border-[#b4b4b4] bg-[#f0f0f0]" />
        <label htmlFor="crs">CRS</label>
        <div className="flex items-center gap-1.5">
          <Combo id="crs" value="Project CRS: EPSG:31254 - MGI / Austria GK West" className="flex-1" />
          <PushButton label="Select CRS" className="w-6 border-[#ababab]">
            <Icon name="globeEdit" />
          </PushButton>
        </div>
      </div>

      <div className="mx-3 mt-[15px] flex h-[642px] overflow-hidden border border-[#b4b4b4]">
        <div className="flex-1 px-[9px]">
          <div className="mt-[9px] flex items-center justify-between">
            <label htmlFor="encoding">Encoding</label>
            <Combo id="encoding" value="UTF-8" className="w-[264px]" />
          </div>
          <Check id="selected" label="Save only selected features" disabled className="mt-2" />

          <div className="mt-[3px]">
            <GroupTitle title="Select fields to export and their export options" />
          </div>
          <div className="border border-[#d6d6d6] bg-[#ededed] px-2.5 pb-2.5 pt-[9px]">
            <div className="flex h-[200px] overflow-hidden border border-[#b4b4b4] bg-white">
              <div className="flex-1 bg-linear-to-b from-[#f0f0f0] from-[19px] to-white to-[19px]">
                <table className="border-collapse text-xs">
                  <thead>
                    <tr className="h-[19px]">
                      <th className="w-[93px] border-b border-r border-[#b8b8b8] font-normal">Name</th>
                      <th className="w-[38px] border-b border-[#b8b8b8] font-normal">Type</th>
                    </tr>
                  </thead>
                  <tbody>
                    {fields.map((field) => (
                      <tr key={field} className="h-[30px]">
                        <td className="border-b border-r border-[#b8b8b8] pl-[3px]">
                          <span className="flex items-center">
                            <Check id={field} checked className="mr-1.5" />
                            {field}
                          </span>
                        </td>
                        <td className="border-b border-r border-[#b8b8b8] text-center">String</td>
                      </tr>
                    ))}
                  </tbody>
                </table>
              </div>
              <ScrollBar thumb="h-[27px]" />
            </div>
            <div className="mt-1.5 grid grid-cols-2 gap-[7px]">
              <PushButton>Select All</PushButton>
              <PushButton>Deselect All</PushButton>
            </div>
          </div>

          <div className="mt-1">
            <GroupTitle title="Geometry" />
          </div>
          <div className="h-24 border border-[#d6d6d6] bg-[#ededed] px-2.5 pt-2.5">
            <div className="flex items-center justify-between">
              <label htmlFor="geometry">Geometry type</label>
              <Combo id="geometry" value="Automatic" className="w-[252px]" />
            </div>
            <Check id="multi" label="Force multi-type" disabled className="mt-2" />
            <Check id="zdim" label="Include z-dimension" disabled className="mt-[9px]" />
          </div>

          <div className="mt-[3px]">
            <GroupTitle title="Extent (current: none)" check />
          </div>
          <div className="flex flex-col gap-1.5 border border-[#d6d6d6] bg-[#ededed] px-2.5 py-2.5 text-[#7d7d7d]">
            <div className="flex justify-center pr-1">
              <ExtentField name="North" value="251425.2210" />
            </div>
            <div className="flex justify-between">
              <ExtentField name="West" value="68413.3653" />
              <ExtentField name="East" value="70594.9838" />
            </div>
            <div className="flex justify-center pr-1">
              <ExtentField name="South" value="249297.5821" />
            </div>
            <div className="flex gap-[30px]">
              <PushButton disabled className="w-[150px] border-[#c4c4c4]">Current Layer Extent</PushButton>
              <PushButton disabled className="w-[124px] gap-1 border-[#c4c4c4]">
                Calculate from Layer
                <Triangle className="text-[#999]" />
              </PushButton>
              <PushButton disabled className="w-[150px] border-[#c4c4c4]">Map Canvas Extent</PushButton>
            </div>
          </div>

          <div className="mt-[3px]">
            <GroupTitle title="Layer Options" />
          </div>
          <div className="border border-[#d6d6d6] bg-[#ededed] py-2 pl-[52px] pr-2.5">
            <input aria-label="Layer option" className="h-[22px] w-full rounded-[3px] border border-[#ababab] bg-white" />
          </div>
        </div>
        <ScrollBar thumb="h-[436px]" />
      </div>

      <div className="flex justify-end gap-1.5 px-[11px] pb-[11px] pt-[7px]">
        <Check id="addToMap" label="Add saved file to map" checked className="mr-1.5" />
        <PushButton className="w-20 border-[#4a9bd9]">OK</PushButton>
        <PushButton className="w-20 border-[#ababab]">Cancel</PushButton>
        <PushButton className="w-20 border-[#ababab]">Help</PushButton>
      </div>
    </form>

    {/* red highlight rings over the controls */}
    <svg className="pointer-events-none absolute inset-0 size-full overflow-visible" fill="none" stroke="#d9151b" strokeWidth="2" aria-hidden="true">
      <ellipse cx="120" cy="60" rx="49" ry="15" />
      <ellipse cx="297" cy="90" rx="227" ry="18" />
      <ellipse cx="559" cy="89" rx="23" ry="18" />
      <ellipse cx="221" cy="145" rx="148" ry="16" />
      <ellipse cx="367" cy="832" rx="50" ry="18" />
    </svg>
  </div>
);

/* ---------- status bar ---------- */

const Spin: React.FC<{ id: string; value: string; className: string }> = ({ id, value, className }) => (
  <span className={`flex h-[22px] items-center rounded-[3px] border border-[#ababab] bg-white ${className}`}>
    <input id={id} defaultValue={value} className="min-w-0 flex-1 pl-1 outline-none" />
    <span className="flex h-full w-3.5 flex-col items-center justify-center border-l border-[#ababab]">
      <Triangle dir="up" />
      <Triangle />
    </span>
  </span>
);

const StatusBar: React.FC = () => (
  <footer className="flex h-7 shrink-0 items-center pl-1 pr-1 text-[11px]">
    <span className="mr-auto flex h-[22px] w-[200px] items-center rounded-[3px] border border-[#ababab] bg-white pl-1.5">
      <Icon name="search" className="mr-1.5" />
      <input aria-label="Locate" placeholder="Type to locate (Ctrl+K)" className="min-w-0 flex-1 outline-none placeholder:text-[#777]" />
    </span>
    <label htmlFor="coordinate">Coordinate</label>
    <input id="coordinate" defaultValue="67264,248909" className="ml-[3px] h-[22px] w-[84px] rounded-[3px] border border-[#ababab] bg-white text-center" />
    <Icon name="mouse" className="ml-1" />
    <label htmlFor="scale" className="ml-3 mr-1">Scale</label>
    <span className="relative flex h-[22px] w-[81px]">
      <select id="scale" className="size-full appearance-none rounded-[3px] border border-[#ababab] bg-white pl-[3px]">
        <option>1:16040</option>
      </select>
      <span className="pointer-events-none absolute inset-y-0 right-0 flex w-5 items-center justify-center border-l border-[#ababab]">
        <Triangle />
      </span>
    </span>
    <Icon name="lock" className="ml-2.5 mr-1" />
    <label htmlFor="magnifier" className="mr-0.5">Magnifier</label>
    <Spin id="magnifier" value="100%" className="w-[87px]" />
    <label htmlFor="rotation" className="mx-2">Rotation</label>
    <Spin id="rotation" value="0.0 °" className="w-[83px]" />
    <Check id="render" label="Render" checked className="ml-1.5" />
    <button type="button" className="mx-[18px] flex items-center gap-[3px]">
      <Icon name="globeGrey" />
      EPSG:31254
    </button>
    <button type="button" aria-label="Messages">
      <Icon name="chat" />
    </button>
  </footer>
);

const App: React.FC = () => (
  <div className="relative flex h-screen flex-col overflow-hidden border-r-2 border-[#6e6e6e] bg-[#f0f0f0] font-['Open_Sans','Noto_Sans',sans-serif] text-black">
    <header className="flex h-[23px] shrink-0 items-center bg-white pl-0.5 pr-[18px] text-xs text-[#8a8a8a]">
      <Icon name="qgis" />
      <h1 className="ml-[5px] mr-auto">*TFP_T2_Scharnitz_Sq_Merged — QGIS</h1>
      <svg viewBox="0 0 102 12" className="h-3 w-[102px]" fill="none" stroke="#8a8a8a" aria-label="Window controls">
        <path d="M0 6.5h11M46.5 3.5h7v7h-7zM48.5 3.5v-2h7v7h-2M91.5 1.5l10 10M101.5 1.5l-10 10" />
      </svg>
    </header>

    <nav className="flex h-5 shrink-0 items-center gap-3 border-b border-[#d0d0d0] pl-[9px] text-xs text-[#8a8a8a]">
      {menus.map(([before, key, after]) => (
        <button key={before + key + after} type="button">
          {before}
          <u>{key}</u>
          {after}
        </button>
      ))}
    </nav>

    <div className="shrink-0">
      {toolbars.map((items, i) => (
        <Toolbar key={i} items={items} />
      ))}
    </div>

    <main className="flex min-h-0 flex-1">
      <aside className="flex w-[508px] shrink-0 flex-col">
        <section className="flex h-[247px] shrink-0 flex-col">
          <DockTitle title="Advanced Digitizing" />
          <DockTools items={["-ruler", "|", "-construct", "-parallel", "-perpendicular", "|", "-gear", "|", "-flag"]} />
          <p className="flex flex-1 items-center justify-center pr-2 pt-1 text-[11px]">
            CAD tools are not enabled for the current map tool
          </p>
        </section>
        <Splitter />
        <BrowserDock />
        <Splitter />
        <LayersDock />
      </aside>
      <div className="flex-1 overflow-hidden border-y border-l border-[#b4b4b4] bg-white">
        <svg className="size-full" fill="none" stroke="#b5545c" aria-label="Rail layer">
          <path d="M781 20c1 16 3 22 4 34 3 20 3 36 3 44-1 12-4 20-5 32l-20 90c-2 8-3 12-5 17-3 8-6 14-10 19L677 341" />
          <path d="M783 122 775 146 760 214M781 130 762 214" />
        </svg>
      </div>
    </main>

    <StatusBar />
    <SaveDialog />
  </div>
);

export default App;
